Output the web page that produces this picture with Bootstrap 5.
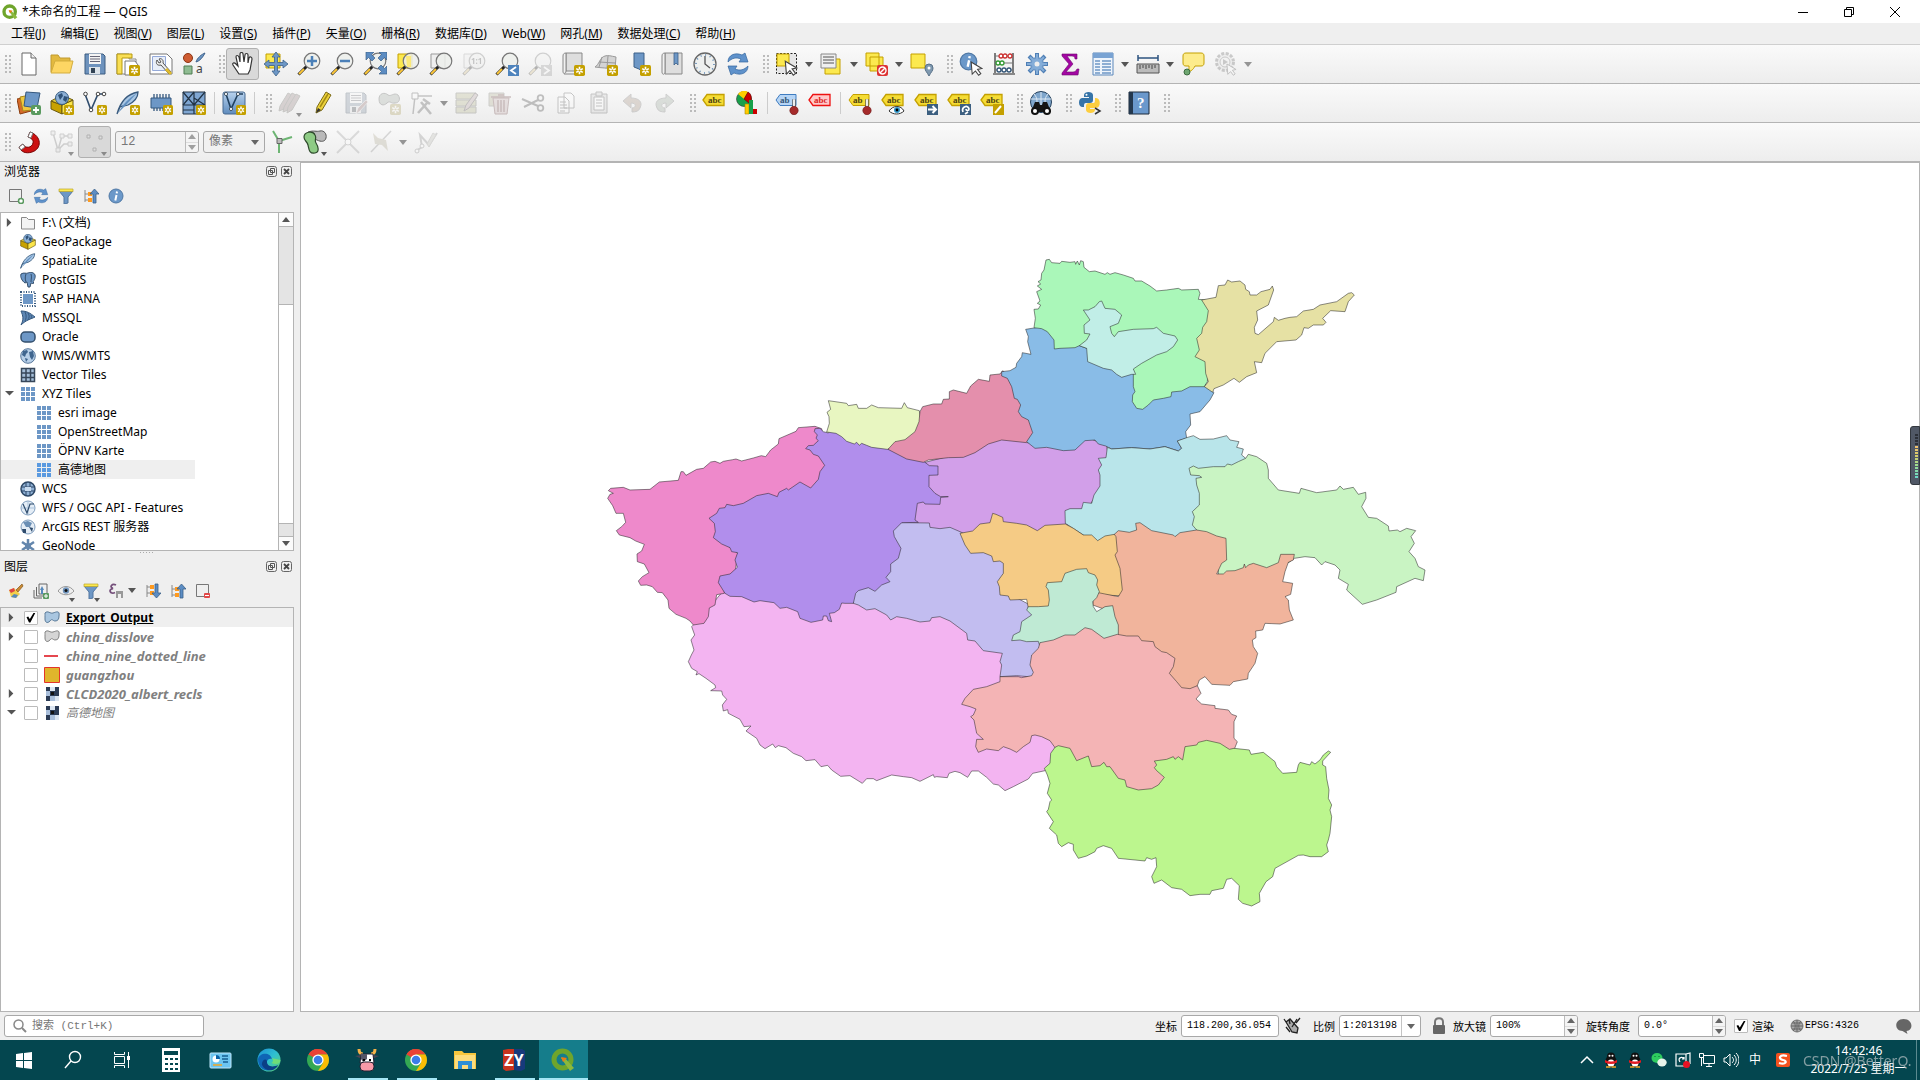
<!DOCTYPE html>
<html lang="zh-CN">
<head>
<meta charset="utf-8">
<meta name="viewport" content="width=device-width, initial-scale=1">
<title>*未命名的工程 — QGIS</title>
<link href="https://cdn.jsdelivr.net/npm/bootstrap@5.3.0/dist/css/bootstrap.min.css" rel="stylesheet">
<style>
:root{--edge:#b4b4b4;--face:#efefef;--mono:"Liberation Mono","Noto Sans CJK SC",monospace}
body{font-family:"Noto Sans","Noto Sans CJK SC",sans-serif;font-size:12px;line-height:18px;color:#000;background:var(--face)}
button{font:inherit;color:inherit}
.titlebar{height:23px;background:#fff;padding-left:2px}
.titlebar .logo{width:16px;height:16px;margin-right:4px;flex:none}
.win-btn{width:46px;height:23px}
.win-btns{margin-right:2px}
.menubar{height:22px;border-bottom:1px solid #cfcfcf}
.menubar a{color:#000;text-decoration:none;padding:0 8px 0 7px}
.toolbar{height:39px;border-bottom:1px solid var(--edge);background:linear-gradient(#fafafa,#ededed)}
.tool{width:33px;height:32px;padding:0;border:1px solid transparent;border-radius:3px;background:none;display:flex;align-items:center;justify-content:center;position:relative;flex:none}
.tool.on{background:#d9d9d9;border-color:#b0b0b0}
.tool svg{width:24px;height:24px}
.off svg{opacity:.3;filter:grayscale(.6)}
.drop{width:12px;flex:none;display:flex;align-items:center;justify-content:center}
.drop::after,.sub::after{content:"";border:4px solid transparent;border-top:5px solid #555;border-bottom:0}
.sub::after{position:absolute;right:3px;bottom:1px;border-width:4px 3px 0}
.drop.off::after,.off.sub::after{opacity:.6}
.grip{width:16px;height:20px;flex:none;background:radial-gradient(circle,#bbb 1px,transparent 1px) 8px 0/4px 4px;background-clip:content-box;padding-left:8px;padding-right:1px}
.grip.first{width:12px;padding-left:4px;padding-right:1px;background-position:4px 0}
.bar{width:7px;height:22px;flex:none;border-left:1px solid #ccc;margin-left:4px;margin-right:-4px}
.field{border:1px solid #a8a8a8;border-radius:3px;background:#fff;height:22px;display:flex;overflow:hidden;position:relative;flex:none}
.field input,.field select{border:0;outline:0;background:transparent;padding:0 5px;min-width:0;flex:1;width:100%;appearance:none;color:#000;font:10px/20px var(--mono)}
.field.dim{background:#f1f1f1}
.field.dim input,.field.dim select{color:#777;font-size:12px}
.field.pick::after{content:"";position:absolute;right:5px;top:8px;border:4px solid transparent;border-top:5px solid #666;border-bottom:0;pointer-events:none}
.field.split::before{content:"";position:absolute;right:18px;top:0;bottom:0;border-left:1px solid #c4c4c4}
.spin{width:13px;border-left:1px solid #bbb;display:flex;flex-direction:column}
.spin button{flex:1;padding:0;border:0;background:#f4f4f4;display:flex;align-items:center;justify-content:center}
.spin button::after{content:"";border:4px solid transparent;border-bottom:5px solid #666;border-top:0}
.spin button+button{border-top:1px solid #ddd}
.spin button+button::after{border-top:5px solid #666;border-bottom:0}
.dim .spin button::after{opacity:.6}
.side{width:300px;padding-right:6px;flex:none}
.dock-head{height:19px;padding:0 2px 0 4px}
.dock-head button{width:11px;height:11px;padding:0;border:0;background:none;display:flex}
.dock-tools{height:31px;padding:0 0 2px 3px}
.dock-tools button{width:25px;height:25px;padding:0;border:0;background:none;display:flex;align-items:center;justify-content:center;position:relative}
.dock-tools svg,.tree svg{width:16px;height:16px;flex:none}
.dock-tools .drop{margin:0 2px 0 -2px}
.tree{border:1px solid var(--edge);background:#fff;overflow:hidden}
.tree-browser{height:339px}
.tree ul{margin:0;padding:0;list-style:none}
.tree li{height:19px;display:flex;align-items:center;padding-left:19px;position:relative;white-space:nowrap}
.tree li svg{margin-right:6px}
.tree li.deep{padding-left:35px}
.tree li.picked{background:#efefef;width:194px}
.picked svg{filter:saturate(1.5)}
.tw{position:absolute;left:4px;top:5px;width:9px;height:9px;padding:0;border:0;background:#555;clip-path:polygon(20% 0,70% 50%,20% 100%)}
.tw.open{clip-path:polygon(0 22%,100% 22%,50% 72%)}
.layers li{padding-left:23px;font-size:13px;font-weight:700;font-style:italic;color:#808080}
.layers li svg{margin:0 6px 0 6px}
.layers .tw{left:6px}
.layers li.current{background:#efefef;color:#000;font-size:12px;font-style:normal;text-decoration:underline}
.layers li.base{font-size:12px}
.grey-icon{filter:grayscale(1) brightness(1.1)}
.tick{appearance:none;width:14px;height:14px;margin:0;border:1px solid #bbb;background:#fff;flex:none;border-radius:1px}
.tick:checked::before{content:"";display:block;width:10px;height:10px;margin:1px;background:#000;clip-path:polygon(5% 48%,22% 40%,38% 66%,78% 0,95% 0,44% 100%,30% 100%)}
.scroll-col{width:15px;border-left:1px solid var(--edge);flex:none;display:flex;flex-direction:column}
.scroll-col button{height:13px;border:0;padding:0;background:#fbfbfb;display:flex;align-items:center;justify-content:center}
.scroll-col button::after{content:"";border:4px solid transparent;border-bottom:5px solid #555;border-top:0}
.scroll-col button:last-child::after{border-top:5px solid #555;border-bottom:0}
.trough{background:#e4e4e4;border:solid var(--edge);border-width:1px 0;height:14px}
.trough.long{height:79px}
.splitter{height:6px}
.splitter i{display:block;width:16px;height:3px;margin:auto;background:radial-gradient(circle,#aaa 1px,transparent 1px) 0 0/3px 3px}
.canvas{border:1px solid var(--edge);background:#fff;position:relative;min-width:0}
.canvas>svg{width:100%;height:100%;display:block}
.meter{position:absolute;right:-1px;top:263px;width:10px;height:59px;border-radius:3px 0 0 3px;background:#505866;border:1px solid #33383f;padding:7px 1px 5px 4px}
.meter i{display:block;height:100%;background:repeating-linear-gradient(transparent 0 2px,#505866 2px 3px),linear-gradient(#2c3038 0 25%,#f0c070 26%,#d8cc68 48%,#9bdc90 70%,#64d8d0)}
.status{height:28px;font-family:"Noto Sans CJK SC",sans-serif;font-size:11px}
.status .find input{font-size:11px;padding-left:5px}
.status .field select{padding:0 0 0 3px}
.find{width:200px}
.find input::placeholder{color:#777}
.w-coord{width:98px}.w-scale{width:82px}.w-spin{width:88px}.w-tol{width:84px}.w-unit{width:62px}
.epsg{font:10px/20px var(--mono);border:0;background:none;padding:0;gap:1px;margin-right:36px}
.taskbar{height:40px;background:#04464f;color:#fff}
.task{width:49px;height:40px;border:0;background:none;padding:0 2px 0 0;display:flex;align-items:center;justify-content:center;position:relative;flex:none}
.task svg{width:24px;height:24px}
.task.run::after{content:"";position:absolute;left:5px;right:4px;bottom:0;height:2px;background:#a5e6f5}
.task.front{background:#157d8b}
.task.front::after{left:0;right:0}
.tray button{width:24px;height:40px;border:0;background:none;color:#fff;padding:0;display:flex;align-items:center;justify-content:center}
.tray svg{width:16px;height:16px}
.clock{width:116px;height:40px;position:relative;text-align:center;border-right:1px solid #5b8a90;line-height:18px;margin-right:3px;margin-left:2px}
.clock .stamp{position:absolute;left:2px;top:12px;color:#a3b4b7;opacity:.8;font-size:14px;white-space:nowrap}
</style>
<script src="https://cdn.jsdelivr.net/npm/bootstrap@5.3.0/dist/js/bootstrap.bundle.min.js"></script>
</head>
<body class="vh-100 overflow-hidden d-flex flex-column">

<svg width="0" height="0" class="position-absolute" aria-hidden="true">
<defs>
<linearGradient id="g-blue" x1="0" y1="0" x2="0" y2="1"><stop stop-color="#b9d3ee"/><stop offset="1" stop-color="#5e8bbd"/></linearGradient>
<linearGradient id="g-edge" x1="0" y1="0" x2="1" y2="1"><stop stop-color="#1b8fd6"/><stop offset=".5" stop-color="#2fc0d0"/><stop offset="1" stop-color="#5fd06a"/></linearGradient>
<symbol id="star" viewBox="0 0 10 10"><rect width="10" height="10" rx="1.500" fill="#c4a000"/><path d="M5 1.600v6.800M2 3.300l6 3.400M8 3.300L2 6.700" stroke="#fff" stroke-width="1.500"/><circle cx="5" cy="5" r="1" fill="#c4a000"/></symbol>
<symbol id="mag" viewBox="0 0 24 24"><path d="M9.500 14.500l-8 8" stroke="#222" stroke-width="3"/><path d="M7 17l-5 5" stroke="#fcc73a" stroke-width="2"/><circle cx="15" cy="9" r="7.800" fill="#eceeeb" fill-opacity=".85" stroke="#777" stroke-width="1.200"/></symbol>
<symbol id="tag" viewBox="0 0 24 24"><path d="M1 9l4-5.500h17v11H5z" fill="#f5dc35" stroke="#c4a000" stroke-width="1.300"/><text x="6" y="12" font-family="Liberation Serif" font-weight="bold" font-size="9" fill="#4d4210">abc</text></symbol>
<symbol id="pin" viewBox="0 0 8 16"><path d="M4 9V2" stroke="#555" stroke-width="3"/><path d="M4 9V2" stroke="#fff" stroke-width="1.600"/><circle cx="4" cy="12" r="3.700" fill="#a52a2a" stroke="#731d1d" stroke-width=".6"/></symbol>
<symbol id="globe" viewBox="0 0 16 16"><circle cx="8" cy="8" r="7.300" fill="#b7cfe8" stroke="#57779a"/><path d="M3 3l4-1 1 2-2 2-1 3-3-2zM9 4l4-1 1 5-2 4-2-3zM5 10l3 1-2 3z" fill="#3f658e"/></symbol>
<symbol id="grid9" viewBox="0 0 16 16"><path d="M1 1h4v4H1zM6 1h4v4H6zM11 1h4v4h-4zM1 6h4v4H1zM6 6h4v4H6zM11 6h4v4h-4zM1 11h4v4H1zM6 11h4v4H6zM11 11h4v4h-4z" fill="#6d97c6"/></symbol>
<symbol id="sync" viewBox="0 0 24 24"><path d="M2 10C2 3 9 0 16 3l3-2 3 9h-9l2-3c-5-2-9-1-13 3zM22 14c0 7-7 10-14 7l-3 2-3-9h9l-2 3c5 2 9 1 13-3z" fill="#5f92cb" stroke="#33669e" stroke-width=".7"/></symbol>
<symbol id="funnel" viewBox="0 0 16 16"><path d="M1 3h14L10 9v6l-4 1V9z" fill="#6d97c6" stroke="#5276a0"/><path d="M1 1h14v2.500H1z" fill="#fce94f" stroke="#bba62c" stroke-width=".7"/></symbol>
<symbol id="feather" viewBox="0 0 24 24"><path d="M1 23C4 12 11 3 22 1c0 7-6 11-10 13-3 1-6 1-8 2z" fill="#a9c7e5" stroke="#385a7e" stroke-width="1.300"/><path d="M2 22C7 13 13 7 21 2L9 15z" fill="#6290c0"/></symbol>
<symbol id="box" viewBox="0 0 24 24"><path d="M1 10l11 4v9L1 18z" fill="#c8a200" stroke="#6b5a10"/><path d="M23 9l-11 5v9l11-6z" fill="#fbe54a" stroke="#6b5a10"/><path d="M1 10l11-6 11 5-11 5z" fill="#e7cf3c" stroke="#6b5a10"/><circle cx="12" cy="7" r="6.500" fill="#8cb0d6" stroke="#365a80"/><path d="M8 4l4-2 1 3-3 4zM14 5l4 1-2 5-3-2z" fill="#2f5278"/></symbol>
<symbol id="tree-up" viewBox="0 0 16 16"><path d="M2 2v12M2 6h4M2 12h4" stroke="#888"/><path d="M5 4h4v4H5zM5 10h4v4H5z" fill="#ff9a1f"/><path d="M7 6l4.500-5L16 6h-3v9h-3V6z" fill="#5c8dc4" stroke="#3b5f88" stroke-width=".8"/></symbol>
<symbol id="tree-down" viewBox="0 0 16 16"><path d="M2 2v12M2 4h4M2 10h4" stroke="#888"/><path d="M5 2h4v4H5zM5 8h4v4H5z" fill="#ff9a1f"/><path d="M7 10l4.500 5L16 10h-3V1h-3v9z" fill="#5c8dc4" stroke="#3b5f88" stroke-width=".8"/></symbol>
<symbol id="info" viewBox="0 0 16 16"><circle cx="8" cy="8" r="7" fill="#6b98c9" stroke="#4f78a5"/><path d="M9 3.500l-.3 1.800M8.500 7l-1.200 5.500" stroke="#fff" stroke-width="2"/></symbol>
<symbol id="arrow-cur" viewBox="0 0 12 14"><path d="M1 1l10 6-4 .8 3 4-2 1.500-3-4-3 3z" fill="#fff" stroke="#444"/></symbol>
<symbol id="poly" viewBox="0 0 16 16"><path d="M1 3c3-3 5 1 8 0s7-3 6 3c0 3-1 5-4 5-2 0-3-3-5 0-3 3-5 1-5-2s0-4 0-6z" fill="#a9c6e0" stroke="#5a7a98"/></symbol>
<symbol id="raster" viewBox="0 0 16 16"><path d="M2 1h13v14H2z" fill="#a9bfdc"/><path d="M2 1h4v4H2zM11 5h4v5h-4zM6 5h5v5H6zM2 10h4v5H2zM11 1h4v4h-4z" fill="#2b3b55"/><path d="M6 1h5v4H6zM11 10h4v5h-4z" fill="#dbe5f1"/><path d="M7 6h3v3H7z" fill="#111"/></symbol>
<symbol id="pencil" viewBox="0 0 24 24"><path d="M5 22l1-6L15 1l5 3L11 19z" fill="#edd23b" stroke="#7a6917"/><path d="M9 16L17 3" stroke="#a48b13" stroke-width="1.500"/><path d="M5 22l2-5 3 2z" fill="#333"/></symbol>
<symbol id="disk" viewBox="0 0 24 24"><path d="M2 2h18l2 2v18H2z" fill="#6d92bd" stroke="#3c5c80"/><path d="M6 2h12v10H6z" fill="#f4f4f4"/><path d="M7 4.500h10M7 7h10M7 9.500h10" stroke="#667"/><path d="M6 15h11v7H6z" fill="#dde4ea"/><path d="M8 16h4v5H8z" fill="#345"/></symbol>
<symbol id="chrome" viewBox="0 0 24 24"><circle cx="12" cy="12" r="11" fill="#34a853"/><path d="M12 12L2.500 6.500A11 11 0 0121.500 6.500H12z" fill="#ea4335"/><path d="M12 23a11 11 0 009.500-16.500H12L17 15z" fill="#fbbc04"/><path d="M2.500 6.500A11 11 0 0112 1v8z" fill="#ea4335"/><circle cx="12" cy="12" r="5.600" fill="#fff"/><circle cx="12" cy="12" r="4.300" fill="#3b7de9"/></symbol>
<symbol id="qgis" viewBox="0 0 24 24"><circle cx="11.500" cy="11.500" r="8.500" fill="none" stroke="#6fa52c" stroke-width="5"/><path d="M10 10l4 0 9 10-4 3z" fill="#8cb83c"/><path d="M10 9l6 1-4 4z" fill="#ee7913"/></symbol>
<symbol id="qq" viewBox="0 0 16 16"><ellipse cx="8" cy="9" rx="5.500" ry="6" fill="#111"/><circle cx="8" cy="4.500" r="4" fill="#111"/><ellipse cx="8" cy="11" rx="3.500" ry="3.600" fill="#fff"/><path d="M2 8c4 2 8 2 12 0v2.500c-4 2-8 2-12 0z" fill="#e31b23"/><circle cx="6.500" cy="3.800" r="1" fill="#fff"/><circle cx="9.500" cy="3.800" r="1" fill="#fff"/><path d="M3 15h4.500M8.500 15H13" stroke="#f5a623" stroke-width="1.500"/></symbol>
<symbol id="glasses" viewBox="0 0 24 24"><path d="M2 21l4-10h4l1 3h2l1-3h4l4 10z" fill="#151515"/><circle cx="6" cy="20" r="4" fill="#111"/><circle cx="18" cy="20" r="4" fill="#111"/><circle cx="6" cy="20" r="2" fill="#fff"/><circle cx="18" cy="20" r="2" fill="#fff"/></symbol>
</defs>
</svg>

<header class="titlebar d-flex align-items-center flex-shrink-0">
  <svg class="logo"><use href="#qgis"/></svg>
  <span class="flex-grow-1">*未命名的工程 — QGIS</span>
  <div class="win-btns d-flex">
  <button class="win-btn btn p-0 border-0 rounded-0" aria-label="最小化"><svg width="10" height="10" class="d-block mx-auto"><path d="M0 5.500h10" stroke="#000"/></svg></button>
  <button class="win-btn btn p-0 border-0 rounded-0" aria-label="还原"><svg width="10" height="10" class="d-block mx-auto"><path d="M.5 2.500h7v7h-7zM2.500 2.500v-2h7v7h-2" fill="none" stroke="#000"/></svg></button>
  <button class="win-btn btn p-0 border-0 rounded-0" aria-label="关闭"><svg width="10" height="10" class="d-block mx-auto"><path d="M0 0l10 10M10 0L0 10" stroke="#000"/></svg></button>
  </div>
</header>

<nav class="menubar d-flex align-items-center flex-shrink-0 ps-1">
  <a href="#">工程(<u>J</u>)</a><a href="#">编辑(<u>E</u>)</a><a href="#">视图(<u>V</u>)</a><a href="#">图层(<u>L</u>)</a><a href="#">设置(<u>S</u>)</a><a href="#">插件(<u>P</u>)</a><a href="#">矢量(<u>O</u>)</a><a href="#">栅格(<u>R</u>)</a><a href="#">数据库(<u>D</u>)</a><a href="#">Web(<u>W</u>)</a><a href="#">网孔(<u>M</u>)</a><a href="#">数据处理(<u>C</u>)</a><a href="#">帮助(<u>H</u>)</a>
</nav>

<div class="toolbar d-flex align-items-center flex-shrink-0" role="toolbar">
  <span class="grip first"></span>
  <button class="tool" aria-label="新建工程"><svg viewBox="0 0 24 24"><path d="M5 1h9l5 5v17H5z" fill="#fff" stroke="#666"/><path d="M14 1v5h5" fill="#eee" stroke="#666"/></svg></button>
  <button class="tool" aria-label="打开工程"><svg viewBox="0 0 24 24"><path d="M1 20V3h7l2 3h10v4" fill="#e2b93f" stroke="#c09a2e"/><path d="M1 21L5 9h18l-3 12z" fill="#fdd663" stroke="#d3ad3f"/></svg></button>
  <button class="tool" aria-label="保存工程"><svg><use href="#disk"/></svg></button>
  <button class="tool" aria-label="新建打印布局"><svg viewBox="0 0 24 24"><path d="M1 2h12l0 5 7 0v15H1z" fill="#fff" stroke="#888"/><path d="M1 2h15v4H6v16H1z" fill="#f9df55" stroke="#b79a10"/><path d="M9 9h10l3 4v10H9z" fill="#fff" stroke="#777"/><use href="#star" x="13" y="13" width="11" height="11"/></svg></button>
  <button class="tool" aria-label="布局管理"><svg viewBox="0 0 24 24"><path d="M1 2h17l5 5v15H1z" fill="#fff" stroke="#777"/><path d="M3.500 4.500h13v14h-13z" fill="#e8eef9" stroke="#94a9d8"/><path d="M8 8c-2 4 1 6 4 5l8 9 2-2-8-9c1-4-3-5-4-4l2 3-2 1z" fill="#eee" stroke="#555"/><path d="M17 17l5 5" stroke="#e0bb2b" stroke-width="3"/></svg></button>
  <button class="tool" aria-label="样式管理"><svg viewBox="0 0 24 24"><circle cx="6" cy="6" r="4.500" fill="#cf5c32" stroke="#8d3513"/><path d="M14 10c1-4 6-8 9-9-2 4-5 8-9 9z" fill="#6d97c6" stroke="#3f628a"/><path d="M2 14h8v8H2z" fill="#8fbc92" stroke="#4f7d52"/><text x="14" y="21" font-family="Noto Sans" font-size="12" fill="#444">a</text></svg></button>
  <span class="grip"></span>
  <button class="tool on" aria-label="平移地图"><svg viewBox="0 0 24 24"><path d="M8 22l-6-9c-1-2 1-3 3-1l2 2-2-9c0-2 2-2 3 0l1 5V2c0-2 3-2 3 0l1 8 1-7c0-2 3-2 3 0v8l1-5c1-2 3-1 3 1l-2 11-2 4z" fill="#fff" stroke="#333" stroke-width="1.200"/></svg></button>
  <button class="tool" aria-label="平移到选择"><svg viewBox="0 0 24 24"><path d="M2 2h14v14H2z" fill="#fce94f" stroke="#c4a000"/><path d="M12 0l4 5h-2.500v5.500H19V8l5 4-5 4v-2.500h-5.500V19H16l-4 5-4-5h2.500v-5.500H5V16l-5-4 5-4v2.500h5.500V5H8z" fill="#6d97c6" stroke="#3d6188" stroke-width=".8"/></svg></button>
  <button class="tool" aria-label="放大"><svg viewBox="0 0 24 24"><use href="#mag"/><path d="M15 4v10M10 9h10" stroke="#4b80b8" stroke-width="2.500"/></svg></button>
  <button class="tool" aria-label="缩小"><svg viewBox="0 0 24 24"><use href="#mag"/><path d="M10 9h10" stroke="#4b80b8" stroke-width="2.500"/></svg></button>
  <button class="tool" aria-label="全图显示"><svg viewBox="0 0 24 24"><use href="#mag"/><path d="M3 0h8L8.500 2.500 12 6 9 9 5.500 5.500 3 8zM24 0v8l-2.500-2.500L18 9l-3-3 3.500-3.500L16 0zM24 22h-8l2.500-2.500L15 16l3-3 3.500 3.500L24 14z" fill="#5c8cc2" stroke="#3d6188" stroke-width=".7"/></svg></button>
  <button class="tool" aria-label="缩放到选择"><svg viewBox="0 0 24 24"><path d="M2 2h14v14H2z" fill="#fce94f" stroke="#c4a000"/><use href="#mag"/><path d="M10 4h5v11h-4z" fill="#fbe979"/></svg></button>
  <button class="tool" aria-label="缩放到图层"><svg viewBox="0 0 24 24"><path d="M2 2h14v14H2z" fill="#eee" stroke="#999"/><use href="#mag"/></svg></button>
  <button class="tool off" aria-label="原始分辨率"><svg viewBox="0 0 24 24"><path d="M2 2h14v14H2z" fill="#eee" stroke="#999"/><use href="#mag"/><text x="9" y="12" font-family="Noto Sans" font-size="8" font-weight="bold" fill="#555">1:1</text></svg></button>
  <button class="tool" aria-label="上一视图"><svg viewBox="0 0 24 24"><use href="#mag"/><path d="M13 13h11v11H13z" fill="#4f84bd"/><path d="M21 15l-5 3.500 5 3.500" fill="none" stroke="#fff" stroke-width="1.800"/></svg></button>
  <button class="tool off" aria-label="下一视图"><svg viewBox="0 0 24 24"><use href="#mag"/><path d="M13 13h11v11H13z" fill="#999"/><path d="M16 15l5 3.500-5 3.500" fill="none" stroke="#fff" stroke-width="1.800"/></svg></button>
  <button class="tool" aria-label="新建地图视图"><svg viewBox="0 0 24 24"><path d="M5 1h16v18H5z" fill="#dedede" stroke="#888"/><path d="M5 1c-2 0-3 1-3 3v16c0 2 3 2 3-1z" fill="#f1f1f1" stroke="#888"/><path d="M3 22h11" stroke="#888"/><use href="#star" x="13" y="13" width="11" height="11"/></svg></button>
  <button class="tool" aria-label="新建三维视图"><svg viewBox="0 0 24 24"><path d="M1 15C5 13 6 5 11 4c3-1 6 0 11 1l-1 12c-8-1-13-1-20-2z" fill="#d4d4d4" stroke="#999"/><path d="M5 10l16 1M8 5l-3 10M14 4l-1 12" stroke="#999" fill="none"/><use href="#star" x="13" y="13" width="11" height="11"/></svg></button>
  <button class="tool" aria-label="新建书签"><svg viewBox="0 0 24 24"><path d="M7 1h10v20l-5-4-5-2z" fill="#6d97c6" stroke="#3d6188"/><use href="#star" x="13" y="13" width="11" height="11"/></svg></button>
  <button class="tool" aria-label="显示书签"><svg viewBox="0 0 24 24"><path d="M5 1h17v21H5z" fill="#dedede" stroke="#888"/><path d="M5 1c-2 0-3 1-3 3v16c0 3 3 3 3 0z" fill="#f1f1f1" stroke="#888"/><path d="M14 1h4v12l-2-2-2 2z" fill="#6d97c6" stroke="#3d6188" stroke-width=".8"/></svg></button>
  <button class="tool" aria-label="时态控制"><svg viewBox="0 0 24 24"><circle cx="12" cy="12" r="11" fill="#eef0ef" stroke="#666" stroke-width="1.300"/><circle cx="12" cy="12" r="9" fill="none" stroke="#5580b0" stroke-dasharray="1 3.700" stroke-width="1.500"/><path d="M12 4v8l5 4" fill="none" stroke="#555" stroke-width="1.300"/></svg></button>
  <button class="tool" aria-label="刷新"><svg><use href="#sync"/></svg></button>
  <span class="grip"></span>
  <button class="tool" aria-label="选择要素"><svg viewBox="0 0 24 24"><path d="M1.500 1.500h20v20h-20z" fill="#e6e6e6" stroke="#222" stroke-dasharray="2 1.500"/><path d="M2 2h12v12H2z" fill="#fce94f" stroke="#c4a000"/><use href="#arrow-cur" x="9" y="8" width="14" height="16"/></svg></button><span class="drop"></span>
  <button class="tool" aria-label="按值选择"><svg viewBox="0 0 24 24"><path d="M5 7h15v15H5z" fill="#fce94f" stroke="#c4a000"/><path d="M1 2h15v14H1z" fill="#efefef" stroke="#888"/><path d="M3 5h11M3 8h11M3 11h11" stroke="#888" stroke-width="1.500"/></svg></button><span class="drop"></span>
  <button class="tool" aria-label="取消选择"><svg viewBox="0 0 24 24"><path d="M1 1h13v13H1zM5 5h13v14H5z" fill="#fce94f" stroke="#c4a000"/><rect x="12" y="13" width="11" height="11" rx="2" fill="#d33"/><circle cx="17.500" cy="18.500" r="3.500" fill="none" stroke="#fff" stroke-width="1.400"/><path d="M15 21l5-5" stroke="#fff" stroke-width="1.400"/></svg></button><span class="drop"></span>
  <button class="tool" aria-label="按位置选择"><svg viewBox="0 0 24 24"><path d="M1 2h14v14H1z" fill="#fce94f" stroke="#c4a000"/><path d="M19 24c-2-4-4-5-4-8a4 4 0 018 0c0 3-2 4-4 8z" fill="#7f99b0" stroke="#587087"/><circle cx="19" cy="16" r="1.500" fill="#fff"/></svg></button>
  <span class="grip"></span>
  <button class="tool" aria-label="识别要素"><svg viewBox="0 0 24 24"><use href="#info" width="19" height="19"/><use href="#arrow-cur" x="11" y="9" width="13" height="15"/></svg></button>
  <button class="tool" aria-label="字段计算器"><svg viewBox="0 0 24 24"><path d="M3 1v20M21 1v20" stroke="#555" stroke-width="1.500"/><path d="M1 21h22v2H1z" fill="#888"/><path d="M3 4h18M3 11h18M3 18h18" stroke="#777"/><g fill="#fff" stroke-width="1.300"><g stroke="#c33"><circle cx="9" cy="4" r="2"/><circle cx="13" cy="4" r="2"/><circle cx="18" cy="4" r="2"/></g><g stroke="#393"><circle cx="6" cy="11" r="2"/><circle cx="10" cy="11" r="2"/></g><g stroke="#357"><circle cx="7" cy="18" r="2"/><circle cx="12" cy="18" r="2"/><circle cx="17" cy="18" r="2"/></g></g></svg></button>
  <button class="tool" aria-label="工具箱"><svg viewBox="0 0 24 24"><g stroke="#4f7fb5" stroke-width="4"><path d="M12 1v22M1 12h22M4 4l16 16M20 4L4 20"/></g><circle cx="12" cy="12" r="7" fill="#6d97c6"/><g stroke="#84add8" stroke-width="2"><path d="M12 2v20M2 12h20M5 5l14 14M19 5L5 19"/></g><circle cx="12" cy="12" r="5.500" fill="#84add8"/><circle cx="12" cy="12" r="2.500" fill="#eee"/></svg></button>
  <button class="tool" aria-label="统计面板"><svg viewBox="0 0 24 24"><path d="M4 2h15v5h-2c0-2-1-3-3-3H9l6 8-7 8h7c2 0 3-1 4-3h2l-1 6H4v-2l7-9-7-8z" fill="#a307a3" stroke="#6c0c6c" stroke-width=".6"/></svg></button>
  <button class="tool" aria-label="打开属性表"><svg viewBox="0 0 24 24"><path d="M2 1h20v22H2z" fill="#eef4fb" stroke="#5a87ba"/><path d="M2 1h20v5H2z" fill="#79a3d3"/><path d="M4 9h5M11 9h9M4 12h5M11 12h9M4 15h5M11 15h9M4 18h5M11 18h9M4 21h5M11 21h9" stroke="#6d97c6" stroke-width="1.500"/></svg></button><span class="drop"></span>
  <button class="tool" aria-label="测量"><svg viewBox="0 0 24 24"><path d="M2 6h20M2 3v6M22 3v6" stroke="#2e5480" stroke-width="1.500"/><path d="M1 12h22v9H1z" fill="#bbb" stroke="#555"/><path d="M4 13v4M7 13v3M10 13v4M13 13v3M16 13v4M19 13v3" stroke="#444"/></svg></button><span class="drop"></span>
  <button class="tool" aria-label="地图提示"><svg viewBox="0 0 24 24"><path d="M5 1h15c2 0 3 1 3 3v7c0 2-1 3-3 3h-6c-2 4-4 5-7 6 1-2 1-4 1-6H5c-2 0-3-1-3-3V4c0-2 1-3 3-3z" fill="#fdec8c" stroke="#c4a000"/><circle cx="6" cy="20" r="3" fill="#6ea671" stroke="#3c6c3f"/></svg></button>
  <button class="tool off" aria-label="运行要素动作"><svg viewBox="0 0 24 24"><circle cx="11" cy="10" r="8.500" fill="#ddd" stroke="#666" stroke-width="3" stroke-dasharray="3 1.500"/><circle cx="11" cy="10" r="5" fill="#eee" stroke="#666"/><path d="M9 7l5 3-5 3z" fill="#666"/><use href="#arrow-cur" x="12" y="11" width="11" height="13"/></svg></button><span class="drop off"></span>
</div>

<div class="toolbar d-flex align-items-center flex-shrink-0" role="toolbar">
  <span class="grip first"></span>
  <button class="tool" aria-label="数据源管理器"><svg viewBox="0 0 24 24"><path d="M0 8l11-2 3 14-11 3z" fill="#d66a28" stroke="#8b3d10"/><path d="M3 6l10-2 2 15-9 1z" fill="#f0c83e" stroke="#a8861a"/><path d="M9 1l14 1-3 15-13-2z" fill="#6d97c6" stroke="#35587e"/><rect x="14" y="14" width="10" height="10" rx="2" fill="#5a9a5f"/><path d="M19 16v6M16 19h6" stroke="#fff" stroke-width="1.800"/></svg></button>
  <button class="tool" aria-label="新建 GeoPackage"><svg viewBox="0 0 24 24"><use href="#box"/><use href="#star" x="14" y="14" width="10" height="10"/></svg></button>
  <button class="tool" aria-label="新建 Shapefile"><svg viewBox="0 0 24 24"><path d="M2 3l6 16 7-16h6" fill="none" stroke="#2f4c6d" stroke-width="1.600"/><g fill="#fff" stroke="#444"><circle cx="2.500" cy="3" r="1.800"/><circle cx="8" cy="19" r="1.800"/><circle cx="15" cy="3" r="1.800"/><circle cx="21" cy="3" r="1.800"/></g><use href="#star" x="14" y="14" width="10" height="10"/></svg></button>
  <button class="tool" aria-label="新建 SpatiaLite"><svg viewBox="0 0 24 24"><use href="#feather"/><use href="#star" x="14" y="14" width="10" height="10"/></svg></button>
  <button class="tool" aria-label="新建临时图层"><svg viewBox="0 0 24 24"><path d="M5 3v17M8 3v17M11 3v17M14 3v17M17 3v17M20 3v17" stroke="#35587e" stroke-width="1.300"/><path d="M2 7h20v10H2z" fill="#6d97c6" stroke="#35587e"/><use href="#star" x="14" y="14" width="10" height="10"/></svg></button>
  <button class="tool" aria-label="新建网格图层"><svg viewBox="0 0 24 24"><path d="M1 1h22v22H1z" fill="#7fa6d2" stroke="#234"/><path d="M12 1v22M1 14h22M1 1l11 13M1 14L12 1M12 14L23 1M12 7l11 7M1 19h11" stroke="#234" fill="none" stroke-width="1.200"/><use href="#star" x="14" y="14" width="10" height="10"/></svg></button>
  <span class="bar"></span>
  <button class="tool" aria-label="新建虚拟图层"><svg viewBox="0 0 24 24"><rect x="1" y="1" width="22" height="22" rx="2" fill="url(#g-blue)" stroke="#46698f"/><path d="M4 3l5 15L16 3h5" fill="none" stroke="#20405f" stroke-width="1.600"/><g fill="#fff" stroke="#456"><circle cx="4" cy="3" r="1.600"/><circle cx="9" cy="18" r="1.600"/><circle cx="16" cy="3" r="1.600"/></g><use href="#star" x="14" y="14" width="10" height="10"/></svg></button>
  <span class="bar"></span><span class="grip"></span>
  <button class="tool off sub" aria-label="当前编辑"><svg viewBox="0 0 24 24"><g fill="#a87d7d" stroke="#665"><path d="M1 20l1-5L10 2l4 2L6 18z"/><path d="M5 21l1-5L14 2l4 2-8 15z"/><path d="M9 22l1-6L18 3l4 2-8 14z"/></g></svg></button>
  <button class="tool" aria-label="切换编辑"><svg><use href="#pencil"/></svg></button>
  <button class="tool off" aria-label="保存编辑"><svg viewBox="0 0 24 24"><use href="#disk"/><path d="M12 23l2-6 8-8 2 2-8 9z" fill="#b66" stroke="#fff" stroke-width=".5"/></svg></button>
  <button class="tool off" aria-label="添加面要素"><svg viewBox="0 0 24 24"><path d="M2 8c0-6 6-7 9-4 3 2 6-3 10 0 3 4 1 8-3 8-4 1-5-3-8 0s-8 3-8-4z" fill="#9ab09a" stroke="#555"/><use href="#star" x="13" y="13" width="11" height="11"/></svg></button>
  <button class="tool off" aria-label="节点工具"><svg viewBox="0 0 24 24"><path d="M5 5h17M5 5L3 23" stroke="#555" stroke-width="1.500"/><path d="M2 2h6v6H2z" fill="#fff" stroke="#444"/><path d="M8 22l9-10M11 11l10 12M13 8l7 5" stroke="#555" stroke-width="2.600"/></svg></button><span class="drop off"></span>
  <button class="tool off" aria-label="修改属性"><svg viewBox="0 0 24 24"><path d="M1 2h20v6H1zM1 9h20v6H1zM1 16h20v6H1z" fill="#b7b84b" stroke="#665"/><path d="M9 20l2-6 9-12 3 2-9 13z" fill="#c99" stroke="#544"/></svg></button>
  <button class="tool off" aria-label="删除选中"><svg viewBox="0 0 24 24"><path d="M1 2h15v13H1z" fill="#b8b060" stroke="#776"/><path d="M5 7h16l-2 16H7z" fill="#e0a5a5" stroke="#933"/><path d="M3 6h20M10 9v12M13 9v12M16 9v12M10 4h6" stroke="#933" stroke-width="1.500"/></svg></button>
  <button class="tool off" aria-label="剪切"><svg viewBox="0 0 24 24"><path d="M1 8l16 7M3 16l14-7" stroke="#444" stroke-width="2"/><circle cx="19.500" cy="7" r="2.800" fill="none" stroke="#444" stroke-width="1.800"/><circle cx="19.500" cy="17" r="2.800" fill="none" stroke="#444" stroke-width="1.800"/></svg></button>
  <button class="tool off" aria-label="复制"><svg viewBox="0 0 24 24"><path d="M10 2h7l3 3v12H10zM4 6h7l4 4v12H4z" fill="#fff" stroke="#555"/><path d="M6 11h6M6 14h7M6 17h7M6 20h5" stroke="#555"/></svg></button>
  <button class="tool off" aria-label="粘贴"><svg viewBox="0 0 24 24"><path d="M4 3h16v19H4z" fill="#ccc" stroke="#555"/><path d="M7 6h10v13H7z" fill="#fff" stroke="#555"/><path d="M9 1h6v4H9zM9 9h6M9 12h6M9 15h6" fill="#ccc" stroke="#555"/></svg></button>
  <button class="tool off" aria-label="撤销"><svg viewBox="0 0 24 24"><path d="M3 10l8-7v4c8 0 12 4 9 10-1 3-4 4-8 4v-4c4 0 5-5-1-5v5z" fill="#c08b60" stroke="#777"/></svg></button>
  <button class="tool off" aria-label="重做"><svg viewBox="0 0 24 24"><path d="M21 10l-8-7v4c-8 0-12 4-9 10 1 3 4 4 8 4v-4c-4 0-5-5 1-5v5z" fill="#8fb08f" stroke="#777"/></svg></button>
  <span class="grip"></span>
  <button class="tool" aria-label="图层标注选项"><svg><use href="#tag"/></svg></button>
  <button class="tool" aria-label="图层图表选项"><svg viewBox="0 0 24 24"><circle cx="9" cy="8" r="7.500" fill="#18a04a" stroke="#333" stroke-width=".6"/><path d="M9 8L3 3a7.500 7.500 0 0110-2z" fill="#fc0"/><path d="M9 8l4-7c4 2 4 8 2 12z" fill="#c00" stroke="#600" stroke-width=".6"/><path d="M10 13h4v10h-4z" fill="#fc0" stroke="#a80" stroke-width=".6"/><path d="M14 9h4v14h-4z" fill="#18a04a"/><path d="M18 18h4v5h-4z" fill="#c00"/></svg></button>
  <span class="bar"></span>
  <button class="tool" aria-label="高亮固定标注"><svg viewBox="0 0 24 24"><path d="M1 9l4-5.500h16v11H5z" fill="#b5d4f5" stroke="#3f7cc0"/><text x="5" y="12" font-family="Liberation Serif" font-weight="bold" font-size="9" fill="#357">ab</text><use href="#pin" x="14" y="6" width="10" height="18"/></svg></button>
  <button class="tool" aria-label="显示未放置标注"><svg viewBox="0 0 24 24"><path d="M1 9l4-5.500h17v11H5z" fill="#ffc9c9" stroke="#e11" stroke-width="1.300"/><text x="6" y="12" font-family="Liberation Serif" font-weight="bold" font-size="9" fill="#d22">abc</text></svg></button>
  <span class="bar"></span>
  <button class="tool" aria-label="固定标注"><svg viewBox="0 0 24 24"><path d="M1 9l4-5.500h16v11H5z" fill="#f5dc35" stroke="#c4a000"/><text x="5" y="12" font-family="Liberation Serif" font-weight="bold" font-size="9" fill="#4d4210">ab</text><use href="#pin" x="14" y="6" width="10" height="18"/></svg></button>
  <button class="tool" aria-label="显示隐藏标注"><svg viewBox="0 0 24 24"><use href="#tag"/><path d="M8 20c4-6 12-6 15 0-4 4-11 4-15 0z" fill="#fff" stroke="#333"/><circle cx="16" cy="19" r="3" fill="#39c"/><circle cx="16" cy="19" r="1.400" fill="#000"/></svg></button>
  <button class="tool" aria-label="移动标注"><svg viewBox="0 0 24 24"><use href="#tag"/><path d="M13 13h11v11H13z" fill="#3c5f80"/><path d="M14 18.500h7M18.500 15l3.500 3.500-3.500 3.500" stroke="#fff" fill="none" stroke-width="2"/></svg></button>
  <button class="tool" aria-label="旋转标注"><svg viewBox="0 0 24 24"><use href="#tag"/><path d="M13 13h11v11H13z" fill="#3c5f80"/><path d="M16 21c-2-5 5-8 6-3 0 2-3 2-3 0M18 23l3-2" stroke="#fff" fill="none" stroke-width="1.700"/></svg></button>
  <button class="tool" aria-label="修改标注"><svg viewBox="0 0 24 24"><use href="#tag"/><path d="M13 13h11v11H13z" fill="#c4a000"/><path d="M15 22l6-7" stroke="#fff" stroke-width="2"/></svg></button>
  <span class="grip"></span>
  <button class="tool" aria-label="搜索目录"><svg viewBox="0 0 24 24"><circle cx="12" cy="11" r="10.500" fill="#7fa6cc" stroke="#24405c"/><path d="M2 8h20M12 1v18M5 3c4 4 4 10 0 14M19 3c-4 4-4 10 0 14" fill="none" stroke="#dde8f3"/><use href="#glasses" width="24" height="24"/></svg></button>
  <span class="grip"></span>
  <button class="tool" aria-label="Python 控制台"><svg viewBox="0 0 24 24"><path d="M6 4c0-4 9-4 9 0v5c0 2-1 3-3 3H8c-2 0-2 1-2 4H4c-4 0-4-9 0-9h7V6H6z" fill="#3674a8"/><path d="M17 19c0 4-9 4-9 0v-4c0-2 1-3 3-3h4c2 0 2-1 2-5h1c5 0 5 10 0 10h-6v1h5z" fill="#fdce3e"/><circle cx="8.500" cy="3.800" r="1" fill="#fff"/><path d="M17 17l5 3-5 3" fill="none" stroke="#333" stroke-width="1.500"/></svg></button>
  <span class="grip"></span>
  <button class="tool" aria-label="帮助"><svg viewBox="0 0 24 24"><path d="M2 1h20v22H2z" fill="#6a98cc" stroke="#1c2b3b"/><path d="M2 1h4v22H2z" fill="#24384e"/><text x="10" y="17" font-family="Liberation Serif" font-size="15" font-weight="bold" fill="#fff">?</text></svg></button>
  <span class="grip"></span>
</div>

<div class="toolbar d-flex align-items-center flex-shrink-0" role="toolbar">
  <span class="grip first"></span>
  <button class="tool" aria-label="启用捕捉"><svg viewBox="0 0 24 24"><path d="M2 17l4-3c2 5 9 4 10-1 1-3-2-5-5-6l2-5c12 4 12 17 2 20-6 2-11 0-13-5z" fill="#c11" stroke="#700"/><path d="M11 7l2-5 3 1-2 5zM2 17l4-3 2 3-4 3z" fill="#fff" stroke="#777"/></svg></button>
  <button class="tool off sub" aria-label="捕捉图层"><svg viewBox="0 0 24 24"><path d="M3 3l5 17L12 6M8 20l6-6h7M12 6h9" fill="none" stroke="#777" stroke-width="1.500"/><path d="M1 1h4v4H1zM6 18h4v4H6zM10 4h4v4h-4zM18 4h4v4h-4zM18 12h4v4h-4z" fill="#ddd" stroke="#777"/></svg></button>
  <button class="tool on off sub" aria-label="捕捉类型"><svg viewBox="0 0 24 24"><path d="M4 5h3v3H4zM16 6h3v3h-3zM10 18h3v3h-3z" fill="#eee" stroke="#555"/></svg></button>
  <div class="field dim w-tol ms-1"><input value="12" aria-label="容差" disabled><span class="spin"><button aria-label="增加"></button><button aria-label="减少"></button></span></div>
  <div class="field dim pick w-unit ms-1"><select aria-label="单位" disabled><option>像素</option></select></div>
  <button class="tool" aria-label="拓扑编辑"><svg viewBox="0 0 24 24"><path d="M3 1l6 10 13-4M9 11v12" stroke="#6db573" stroke-width="2" fill="none"/><path d="M7 8.500h5v5H7z" fill="#bbb" stroke="#666"/></svg></button>
  <button class="tool sub" aria-label="避免重叠"><svg viewBox="0 0 24 24"><path d="M5 2c6-2 8 0 12-1s7 3 6 7-5 4-9 2-10 0-11-4z" fill="#b9b9b9" stroke="#555"/><path d="M1 7c0-5 9-7 11-2 2 3-1 5 1 8s4 9-1 10c-6 1-6-4-7-8S1 11 1 7z" fill="#8ecb85" stroke="#2e4a2c" stroke-width="1.200"/></svg></button>
  <button class="tool off" aria-label="交点捕捉"><svg viewBox="0 0 24 24"><path d="M1 1l22 22M23 1L1 23" stroke="#999" stroke-width="2"/><circle cx="12" cy="12" r="3" fill="#fff" stroke="#888"/></svg></button>
  <button class="tool off" aria-label="启用追踪"><svg viewBox="0 0 24 24"><path d="M2 22L22 1" stroke="#888" stroke-width="1.500"/><path d="M4 3l5 5 8 2 2 11-6-6-7-1z" fill="#b8a870"/></svg></button><span class="drop off"></span>
  <button class="tool off" aria-label="自相交捕捉"><svg viewBox="0 0 24 24"><path d="M2 21l6-4L6 5l9 10 8-12" fill="none" stroke="#888" stroke-width="2"/><path d="M13 14l6-11 3 2-7 12z" fill="#bba" stroke="#998"/><circle cx="3" cy="21" r="2" fill="#fff" stroke="#777"/><circle cx="8" cy="16" r="2" fill="#fff" stroke="#777"/></svg></button>
</div>

<main class="d-flex flex-grow-1" style="min-height:0">
  <aside class="side d-flex flex-column">
    <div class="dock-head d-flex align-items-center gap-1"><span class="flex-grow-1">浏览器</span>
      <button aria-label="浮动浏览器"><svg viewBox="0 0 11 11"><rect x=".5" y=".5" width="10" height="10" rx="2" fill="none" stroke="#666"/><path d="M4.500 2.500h4v4h-4zM2.500 4.500h4v4h-4z" fill="#efefef" stroke="#555"/></svg></button>
      <button aria-label="关闭浏览器"><svg viewBox="0 0 11 11"><rect x=".5" y=".5" width="10" height="10" rx="2" fill="none" stroke="#666"/><path d="M3 3l5 5M8 3L3 8" stroke="#444" stroke-width="1.800"/></svg></button>
    </div>
    <div class="dock-tools d-flex align-items-center">
      <button aria-label="添加图层"><svg viewBox="0 0 16 16"><path d="M1.500 1.500h12v12h-12z" fill="none" stroke="#777"/><circle cx="13" cy="13" r="2.500" fill="#fff" stroke="#5a9a5f" stroke-width="1.500"/></svg></button>
      <button aria-label="刷新浏览器"><svg><use href="#sync"/></svg></button>
      <button aria-label="过滤浏览器"><svg><use href="#funnel"/></svg></button>
      <button aria-label="全部折叠"><svg><use href="#tree-up"/></svg></button>
      <button aria-label="属性"><svg><use href="#info"/></svg></button>
    </div>
    <div class="tree tree-browser d-flex">
      <ul class="flex-grow-1">
        <li><button class="tw" aria-label="展开"></button><svg viewBox="0 0 16 16"><path d="M1.500 2.500h5l2 2h6v9.500h-13z" fill="#f3f3f3" stroke="#888"/></svg>F:\ (文档)</li>
        <li><svg><use href="#box"/></svg>GeoPackage</li>
        <li><svg><use href="#feather"/></svg>SpatiaLite</li>
        <li><svg viewBox="0 0 16 16"><path d="M1 2c3-2 5 0 7-1s6-1 7 2-2 7-2 7l1 1c-1 1-3 0-3 0l-1 4H8l-1-5-2 1C2 9 0 5 1 2z" fill="#6d97c6" stroke="#34506e"/><path d="M6 2c-1 3-1 5 0 8M11 2c1 3 0 5 0 8" fill="none" stroke="#34506e"/></svg>PostGIS</li>
        <li><svg viewBox="0 0 16 16"><path d="M1 1h14v14H1z" fill="none" stroke="#35587e" stroke-width="2" stroke-dasharray="1 1.500"/><path d="M3 3h10v10H3z" fill="#6d97c6"/></svg>SAP HANA</li>
        <li><svg viewBox="0 0 16 16"><path d="M1 1c6 0 9 2 14 6-4 2-9 3-14 8 3-6 2-9 0-14z" fill="#5f88b5" stroke="#35587e"/><path d="M5 2c2 4 1 7 0 9M8 3c2 3 1 5 0 7M11 5c1 2 0 3 0 4" fill="none" stroke="#35587e"/></svg>MSSQL</li>
        <li><svg viewBox="0 0 16 16"><rect x="1" y="3" width="14" height="10" rx="4" fill="#6d97c6" stroke="#34506e" stroke-width="1.500"/></svg>Oracle</li>
        <li><svg><use href="#globe"/></svg>WMS/WMTS</li>
        <li><svg viewBox="0 0 16 16"><path d="M1.500 1.500h13v13h-13zM1 6h14M1 10.500h14M6 1v14M10.500 1v14" fill="#a6bfda" stroke="#37475a" stroke-width="1.500"/></svg>Vector Tiles</li>
        <li><button class="tw open" aria-label="折叠"></button><svg><use href="#grid9"/></svg>XYZ Tiles</li>
        <li class="deep"><svg><use href="#grid9"/></svg>esri image</li>
        <li class="deep"><svg><use href="#grid9"/></svg>OpenStreetMap</li>
        <li class="deep"><svg><use href="#grid9"/></svg>ÖPNV Karte</li>
        <li class="deep picked"><svg><use href="#grid9"/></svg>高德地图</li>
        <li><svg viewBox="0 0 16 16"><circle cx="8" cy="8" r="7" fill="#8fb0d4" stroke="#2c4766" stroke-width="1.500"/><path d="M1 6h14M1 10h14M6 1v14M10 1v14" stroke="#2c4766"/><path d="M5 6h6v4H5z" fill="#c9dcf0"/></svg>WCS</li>
        <li><svg viewBox="0 0 16 16"><circle cx="8" cy="8" r="7" fill="#e4edf6" stroke="#7f9dbd"/><path d="M1 8h14M8 1v14" stroke="#a9c1da"/><path d="M3 4l4 9 3-9h4" fill="none" stroke="#2f4c6d" stroke-width="1.200"/></svg>WFS / OGC API - Features</li>
        <li><svg viewBox="0 0 16 16"><circle cx="8" cy="8" r="7" fill="#e4edf6" stroke="#7f9dbd"/><path d="M3 3l5-1 4 2-2 4-4 0z" fill="#6b8fb5"/><path d="M2 10h4v4H3zM9 8l4 1-1 4z" fill="#2f4c6d"/></svg>ArcGIS REST 服务器</li>
        <li><svg viewBox="0 0 16 16"><path d="M8 1v14M2 4l12 8M14 4L2 12" stroke="#6487ad" stroke-width="2.500"/><circle cx="8" cy="8" r="3" fill="#6487ad"/></svg>GeoNode</li>
      </ul>
      <div class="scroll-col"><button aria-label="向上滚动"></button><span class="trough long"></span><span class="flex-grow-1"></span><span class="trough"></span><button aria-label="向下滚动"></button></div>
    </div>
    <div class="splitter"><i></i></div>
    <div class="dock-head d-flex align-items-center gap-1"><span class="flex-grow-1">图层</span>
      <button aria-label="浮动图层"><svg viewBox="0 0 11 11"><rect x=".5" y=".5" width="10" height="10" rx="2" fill="none" stroke="#666"/><path d="M4.500 2.500h4v4h-4zM2.500 4.500h4v4h-4z" fill="#efefef" stroke="#555"/></svg></button>
      <button aria-label="关闭图层"><svg viewBox="0 0 11 11"><rect x=".5" y=".5" width="10" height="10" rx="2" fill="none" stroke="#666"/><path d="M3 3l5 5M8 3L3 8" stroke="#444" stroke-width="1.800"/></svg></button>
    </div>
    <div class="dock-tools d-flex align-items-center">
      <button aria-label="图层样式"><svg viewBox="0 0 16 16"><path d="M1 7l5-2 6 6-4 4-5-1z" fill="#f2cf4a"/><path d="M1 7l5-2 1 3-4 2z" fill="#d44"/><path d="M3 14l5 1 2-3-4-1z" fill="#58b"/><path d="M8 7l6-6 1 2-5 6z" fill="#c98b35" stroke="#85571a" stroke-width=".7"/></svg></button>
      <button aria-label="添加组"><svg viewBox="0 0 16 16"><path d="M6 1h8v10H6zM3.500 4v9h9M1 7v8h8" fill="none" stroke="#666"/><path d="M9 3l-2 4h1v4h2V7h1z" fill="#58b"/><rect x="10" y="10" width="6" height="6" rx="1" fill="#5a9a5f"/><path d="M13 11v4M11 13h4" stroke="#fff"/></svg></button>
      <button class="sub" aria-label="地图主题"><svg viewBox="0 0 16 16"><path d="M0 8c4-6 12-6 16 0-4 5-12 5-16 0z" fill="#eee" stroke="#999"/><circle cx="8" cy="7.500" r="3.200" fill="#6f93bb"/><circle cx="8" cy="7.500" r="1.500" fill="#111"/></svg></button>
      <button class="sub" aria-label="过滤图例"><svg><use href="#funnel"/></svg></button>
      <button aria-label="按表达式过滤"><svg viewBox="0 0 16 16"><path d="M8 2C4 0 1 4 5 5.500 0 6 2 12 7 9.500" fill="none" stroke="#75507b" stroke-width="1.800"/><path d="M8 8h7v7h-2v-4h-3v4H8z" fill="#999"/></svg></button><span class="drop"></span>
      <button aria-label="全部展开"><svg><use href="#tree-down"/></svg></button>
      <button aria-label="折叠图层"><svg><use href="#tree-up"/></svg></button>
      <button aria-label="移除图层"><svg viewBox="0 0 16 16"><path d="M1.500 1.500h12v12h-12z" fill="none" stroke="#777"/><rect x="9" y="10" width="6" height="5" rx="1" fill="#e04848"/><path d="M10 12.500h4" stroke="#fff"/></svg></button>
    </div>
    <div class="tree layers flex-grow-1">
      <ul>
        <li class="current"><button class="tw" aria-label="展开"></button><input class="tick" type="checkbox" id="l1" checked><svg><use href="#poly"/></svg><label for="l1">Export_Output</label></li>
        <li><button class="tw" aria-label="展开"></button><input class="tick" type="checkbox" id="l2"><svg class="grey-icon"><use href="#poly"/></svg><label for="l2">china_disslove</label></li>
        <li><input class="tick" type="checkbox" id="l3"><svg viewBox="0 0 16 16"><path d="M0 8h14" stroke="#e5474f" stroke-width="2"/></svg><label for="l3">china_nine_dotted_line</label></li>
        <li><input class="tick" type="checkbox" id="l4"><svg viewBox="0 0 16 16"><path d="M.5.5h15v15H.5z" fill="#e0b52c" stroke="#e3342b"/></svg><label for="l4">guangzhou</label></li>
        <li><button class="tw" aria-label="展开"></button><input class="tick" type="checkbox" id="l5"><svg><use href="#raster"/></svg><label for="l5">CLCD2020_albert_recls</label></li>
        <li class="base"><button class="tw open" aria-label="折叠"></button><input class="tick" type="checkbox" id="l6"><svg><use href="#raster"/></svg><label for="l6" class="fw-normal">高德地图</label></li>
      </ul>
    </div>
  </aside>

  <section class="canvas flex-grow-1" aria-label="地图">
    <svg viewBox="301 163 1618 848" role="img" aria-label="河南省各市">
      <g stroke="#232323" stroke-opacity=".6" stroke-width="2.600" stroke-linejoin="round">
        <g transform="translate(600 360) scale(.33333)">
          <path fill="#f3b4f1" d="M280 795L275 800 284 825 273 840 282 870 274 885 265 905 275 925 292 935 288 945 297 941 318 955 345 975 347 983 332 992 365 993 368 1005 380 1018 367 1035 370 1053 383 1049 385 1060 420 1078 432 1100 453 1098 438 1113 470 1135 480 1155 495 1166 518 1152 526 1163 535 1157 558 1163 580 1180 605 1190 618 1202 645 1199 663 1220 683 1216 695 1230 722 1249 750 1247 787 1270 800 1256 820 1256 830 1262 875 1245 910 1250 935 1253 960 1264 1000 1244 1003 1252 1010 1250 1042 1253 1047 1240 1065 1234 1080 1238 1103 1252 1115 1233 1135 1233 1160 1252 1180 1272 1195 1275 1215 1292 1240 1280 1285 1257 1298 1240 1335 1232 1360 1210 1370 1160 1340 1100 1250 830 1000 740 500 680 372 690 330 740Z"/>
          <path fill="#ee89cb" d="M25 392L32 385 70 382 90 390 150 388 178 366 235 361 243 335 250 335 258 346 290 328 310 325 332 306 345 304 360 310 370 304 398 299 408 297 425 303 460 294 484 287 497 290 512 270 535 252 537 236 588 214 595 203 645 199 665 206 690 316 640 400 605 400 350 480 350 530 413 580 405 640 372 670 373 700 350 704 345 735 328 744 325 770 312 790 280 795 270 783 258 775 228 763 207 745 204 720 187 698 172 697 157 680 140 675 122 676 115 663 127 650 147 638 133 612 112 605 111 582 125 573 133 553 107 543 90 533 58 525 49 512 65 500 77 487 70 460 48 460 38 437 23 415 30 403 40 400Z"/>
        </g>
        <path fill="#d29fe9" transform="translate(960 240) scale(.33333)" d="M-105 667L0 640 60 615 125 590 380 590 400 600 440 615 445 650 425 740 380 810 325 855 235 890 130 870 30 900 0 890 -60 880 -135 855 -180 850 -180 700Z"/>
        <g transform="translate(600 360) scale(.33333)">
          <path fill="#c2bdf0" d="M905 488L988 489 990 502 1020 506 1050 502 1080 515 1200 570 1230 640 1225 700 1290 735 1330 760 1330 850 1320 955 1285 950 1250 947 1200 950 1205 915 1200 905 1207 880 1150 872 1125 843 1103 840 1100 820 1050 783 1020 770 995 773 990 783 960 786 920 775 890 770 872 780 860 765 825 746 800 750 775 735 760 730 750 700 840 650 870 500Z"/>
          <path fill="#b18eec" d="M645 206L660 205 670 215 685 219 700 200 900 240 975 307 988 317 1014 318 1014 345 987 346 987 380 1005 400 1022 410 1045 410 1022 412 1020 433 975 432 970 426 952 430 945 480 955 487 905 488 880 513 883 530 903 565 895 595 872 612 872 635 858 652 870 665 845 675 825 694 805 683 775 692 767 700 760 730 735 730 725 729 718 748 703 758 688 760 695 785 685 782 680 768 670 768 668 780 633 787 600 775 593 755 560 742 540 745 522 728 480 722 462 726 425 710 390 709 375 700 355 668 360 648 390 642 412 622 405 600 413 578 395 575 390 563 365 552 340 533 346 515 343 490 327 475 350 460 358 445 375 443 380 433 400 437 430 430 470 407 505 400 532 410 537 397 560 385 565 390 600 366 632 384 655 358 660 335 674 316 655 288 640 283 630 270 617 266 625 257 640 256 655 242 648 235 652 225 643 215Z"/>
          <path fill="#e8f6c1" d="M685 122L740 130 745 137 770 133 775 145 800 145 815 135 835 143 905 145 913 128 922 143 958 152 962 180 950 235 862 268 815 262 800 256 785 250 778 256 770 247 763 252 740 244 725 230 708 220 680 216 688 190 687 170 681 157 692 148Z"/>
          <path fill="#e48fac" d="M864 268L885 245 915 239 945 215 957 185 960 155 968 140 1000 132 1025 132 1030 118 1048 117 1048 95 1060 90 1100 100 1112 78 1135 58 1168 64 1170 45 1200 42 1208 32 1240 60 1270 140 1310 200 1310 250 1280 248 1205 240 1165 252 1125 278 1090 292 1045 293 985 300 970 307 920 297Z"/>
        </g>
        <g transform="translate(960 240) scale(.33333)">
          <path fill="#89bce7" d="M197 268L228 263 260 260 440 330 600 420 733 430 762 458 750 480 720 515 690 522 692 555 677 575 680 595 652 603 665 625 655 633 615 620 570 627 515 623 455 627 437 618 415 612 405 600 375 602 345 630 310 632 260 622 225 625 200 605 218 578 205 540 185 530 175 515 182 495 172 478 163 475 155 440 142 415 125 408 125 395 150 392 168 382 170 370 185 350 187 338 213 343 203 305 205 290Z"/>
          <path fill="#aaf7b9" d="M258 60L268 58 275 68 300 70 305 64 330 67 345 65 347 73 352 63 358 75 362 62 370 65 372 82 388 95 405 93 435 103 442 98 450 103 465 98 490 105 520 115 525 123 545 123 570 138 590 153 620 150 655 145 665 150 715 148 720 160 715 178 745 180 760 240 740 350 745 380 742 425 733 440 690 440 665 453 635 456 633 470 610 475 580 480 565 495 548 508 530 505 517 485 518 465 525 455 520 440 520 400 480 360 358 317 345 323 300 325 283 327 282 300 262 275 245 266 222 263 226 235 222 208 235 207 242 195 232 190 240 183 230 155 245 148 232 138 242 132 234 125 243 120 245 100 252 90Z"/>
          <path fill="#c1eee7" d="M358 317L380 325 383 365 430 385 455 390 470 403 485 412 515 403 527 403 520 387 545 370 590 345 620 335 640 320 653 300 645 288 610 280 590 262 580 266 520 268 475 275 463 290 455 280 450 260 475 250 485 225 465 208 435 205 425 183 418 185 405 200 385 210 370 210 390 240 372 255 373 280 390 282 380 300Z"/>
          <path fill="#e6e1a4" d="M725 180L768 172 775 137 795 135 803 120 815 126 840 123 855 135 857 148 868 155 870 165 890 165 903 155 930 148 937 138 941 150 925 195 890 213 893 240 883 262 885 280 895 284 940 245 943 232 955 241 975 235 990 232 1010 230 1030 213 1060 208 1080 195 1130 185 1165 160 1175 158 1183 165 1165 185 1155 215 1112 212 1088 235 1098 247 1090 255 1060 255 1045 265 1032 263 1025 285 1008 300 950 305 915 340 905 368 883 365 890 398 860 410 838 427 822 415 790 435 762 446 758 457 733 440 745 425 737 400 735 365 705 350 718 330 710 295 725 280 728 262 740 245 745 212Z"/>
          <path fill="#b9e5ea" d="M442 622L455 627 515 623 570 627 615 620 655 633 665 625 652 603 680 593 700 587 720 598 760 597 800 587 810 600 837 605 830 622 850 627 845 645 857 655 850 690 740 730 730 800 730 870 690 885 645 900 560 890 470 895 415 905 370 885 316 850 315 812 330 806 365 806 370 787 395 790 402 765 420 738 420 705 415 690 425 675 415 655 438 653Z"/>
          <path fill="#c9f4c3" d="M857 655L865 643 890 650 920 670 925 690 925 715 955 750 1018 760 1023 745 1070 758 1130 750 1140 738 1150 748 1180 742 1195 763 1217 757 1218 775 1205 800 1225 832 1250 835 1285 858 1287 873 1312 870 1320 875 1340 865 1367 872 1353 890 1363 910 1347 935 1365 955 1375 980 1395 990 1390 1022 1365 1015 1310 1040 1308 1057 1250 1080 1207 1093 1160 1050 1165 1033 1135 1015 1140 990 1125 975 1095 965 1085 975 1065 953 1035 950 1003 955 990 965 900 1015 775 1015 775 950 750 900 710 870 697 855 703 830 697 815 718 795 718 760 710 735 708 715 725 712 718 707 692 705 687 685 700 678 715 685 760 680 795 680 802 672 815 675 835 665Z"/>
          <path fill="#f5cb85" d="M0 880L38 873 60 852 90 848 98 820 108 823 128 832 130 845 170 850 200 855 232 872 255 856 316 852 340 865 370 885 395 885 413 902 435 888 463 883 490 890 500 1070 478 1067 420 1065 300 1120 205 1105 200 1078 150 1080 145 1068 120 1065 118 1040 112 1025 130 1000 130 970 120 963 100 965 95 948 70 938 32 940 15 915Z"/>
        </g>
        <g transform="translate(960 500) scale(.33333)">
          <path fill="#f1b49c" d="M463 103L475 92 508 97 530 90 527 70 540 68 575 92 640 105 645 110 660 98 710 90 740 95 770 108 798 115 800 180 785 190 770 222 790 222 800 213 825 212 850 203 853 192 857 203 865 195 880 190 920 203 955 188 962 163 1003 163 1000 180 985 187 975 215 968 245 998 250 992 283 975 290 985 300 988 330 1000 360 960 372 915 370 908 390 887 393 888 413 877 420 880 440 893 460 885 490 865 520 863 537 820 545 810 556 755 553 735 530 718 540 712 557 690 590 590 520 550 440 470 430 440 330 398 315 400 300 415 278 475 290 487 270 480 205 465 165 472 155 468 110Z"/>
          <path fill="#bfead4" d="M205 320L235 320 265 318 268 300 265 270 258 260 262 248 305 245 315 220 350 208 380 206 385 218 405 225 413 240 410 255 418 275 410 293 398 305 400 320 410 335 435 320 458 317 465 350 475 375 475 410 435 430 240 440 235 424 200 425 180 420 155 422 160 405 180 395 185 365 215 345 200 330Z"/>
          <path fill="#f4b4b5" d="M240 428L280 420 315 405 345 405 375 383 395 388 432 415 472 403 500 408 535 408 545 422 580 425 585 440 605 455 620 458 645 475 640 500 628 520 650 545 665 563 690 566 712 557 723 580 708 597 725 612 765 617 765 625 805 630 815 643 830 648 822 665 822 715 832 725 822 750 700 760 640 800 625 840 570 875 500 875 400 815 340 795 290 755 283 740 270 722 245 710 225 705 215 707 210 727 190 740 170 757 150 747 130 740 115 752 80 747 55 757 47 740 50 718 70 718 50 700 42 660 32 650 40 645 48 627 30 620 5 613 15 595 40 568 80 560 120 545 120 530 175 530 185 533 215 527 220 517 210 495 215 465 235 445Z"/>
          <path fill="#bcf68e" d="M285 742L295 737 330 745 350 782 385 768 395 800 420 797 432 787 440 800 450 800 475 835 495 840 500 860 535 870 575 866 595 855 613 832 590 812 583 803 590 795 583 783 620 778 640 770 645 778 655 770 668 780 675 740 710 735 715 727 740 721 780 730 808 748 822 745 868 750 873 763 910 757 945 785 950 800 968 820 1010 817 1015 795 1020 787 1050 795 1055 785 1065 792 1080 780 1090 765 1105 753 1112 757 1088 783 1088 795 1097 800 1100 835 1107 870 1105 895 1115 915 1110 930 1115 950 1110 1000 1105 1020 1100 1035 1105 1055 1085 1070 1050 1070 1030 1065 1015 1066 945 1105 938 1130 918 1145 898 1180 900 1205 875 1218 848 1210 835 1198 838 1157 815 1135 800 1138 790 1165 755 1172 750 1183 720 1183 690 1187 665 1168 635 1163 605 1140 582 1150 575 1130 590 1100 588 1073 575 1078 560 1073 555 1083 475 1075 455 1045 430 1037 410 1045 405 1055 380 1068 355 1075 340 1050 340 1033 325 1028 305 1040 295 1030 290 1005 268 985 280 965 260 935 265 928 270 905 275 900 262 880 270 850 262 825 253 805 270 790 272 760Z"/>
        </g>
      </g>
    </svg>
    <div class="meter"><i></i></div>
  </section>
</main>

<footer class="status d-flex align-items-center flex-shrink-0 ps-1 pe-2">
  <div class="field find align-items-center me-auto">
    <svg width="14" height="14" viewBox="0 0 14 14" class="ms-2 flex-shrink-0"><circle cx="5.500" cy="5.500" r="4.500" fill="none" stroke="#888" stroke-width="1.500"/><path d="M9 9l4 4" stroke="#888" stroke-width="2"/></svg>
    <input type="search" placeholder="搜索 (Ctrl+K)" aria-label="搜索">
  </div>
  <label for="xy">坐标</label>
  <div class="field w-coord ms-1"><input id="xy" value="118.200,36.054"></div>
  <button class="btn p-0 border-0 rounded-0 mx-1 d-flex" aria-label="切换范围显示"><svg width="18" height="18" viewBox="0 0 18 18"><path d="M3 5l4-3 8 9-1 5-5-1zM3 5l-2-3M6 2l1 5M9 10l5-8M13 6l4-5M3 10l4 5" fill="#aaa" stroke="#222" stroke-width="1.300"/></svg></button>
  <label for="scale" class="ms-2">比例</label>
  <div class="field pick split w-scale ms-1"><select id="scale"><option>1:2013198</option></select></div>
  <button class="btn p-0 border-0 rounded-0 ms-2 me-1 d-flex" aria-label="锁定比例"><svg width="20" height="18" viewBox="0 0 20 18"><path d="M6 8V5c0-5 8-5 8 0v3" fill="none" stroke="#777" stroke-width="2"/><rect x="4" y="8" width="12" height="9" rx="1" fill="#666"/></svg></button>
  <label for="zoom">放大镜</label>
  <div class="field w-spin ms-1"><input id="zoom" value="100%"><span class="spin"><button aria-label="增加"></button><button aria-label="减少"></button></span></div>
  <label for="rot" class="ms-2 me-1">旋转角度</label>
  <div class="field w-spin ms-1"><input id="rot" value="0.0°"><span class="spin"><button aria-label="增加"></button><button aria-label="减少"></button></span></div>
  <input class="tick ms-2" type="checkbox" id="render" checked><label for="render" class="ms-1">渲染</label>
  <button class="epsg d-flex align-items-center ms-3"><svg width="14" height="14" viewBox="0 0 14 14"><circle cx="7" cy="7" r="6" fill="#aaa" stroke="#777"/><path d="M1 7h12M7 1v12M3 2c3 3 3 7 0 10M11 2c-3 3-3 7 0 10M2 4h10M2 10h10" fill="none" stroke="#666"/></svg>EPSG:4326</button>
  <button class="btn p-0 border-0 rounded-0 d-flex" aria-label="消息"><svg width="17" height="16" viewBox="0 0 17 16"><path d="M8.500 1c10 0 10 12 3 12l1 3-5-3C-1 13-1 1 8.500 1z" fill="#666"/></svg></button>
</footer>

<nav class="taskbar d-flex align-items-center flex-shrink-0">
  <button class="task" aria-label="开始"><svg viewBox="0 0 24 24"><path d="M4 6l7-1v7H4zM12 5l8-1v8h-8zM4 13h7v7l-7-1zM12 13h8v8l-8-1z" fill="#fff"/></svg></button>
  <button class="task" aria-label="搜索"><svg viewBox="0 0 24 24"><circle cx="14" cy="9" r="5.500" fill="none" stroke="#fff" stroke-width="1.400"/><path d="M10 13l-6 7" stroke="#fff" stroke-width="1.400"/></svg></button>
  <button class="task" aria-label="任务视图"><svg viewBox="0 0 24 24"><path d="M4.500 8.500h10v7h-10zM4.500 4v2.500h10V4M4.500 20v-2.500h10V20M18.500 4v16" fill="none" stroke="#fff"/><path d="M17 8h3v4h-3z" fill="#fff"/></svg></button>
  <button class="task" aria-label="计算器"><svg viewBox="0 0 24 24"><path d="M3 0h18v24H3z" fill="#fff"/><path d="M5 3h14v4H5z" fill="#04464f"/><path d="M6 10h3v2H6zM11 10h3v2h-3zM16 10h3v2h-3zM6 15h3v2H6zM11 15h3v2h-3zM16 15h3v2h-3zM6 20h3v2H6zM11 20h3v2h-3zM16 20h3v2h-3z" fill="#04464f"/></svg></button>
  <button class="task" aria-label="控制面板"><svg viewBox="0 0 24 24"><rect x="2" y="5" width="21" height="15" rx="1" fill="#6cc5f0" stroke="#bfe6fa"/><circle cx="8" cy="11" r="3.500" fill="#fff"/><path d="M8 11V7a4 4 0 014 4z" fill="#0b63a8"/><path d="M14 8h6M14 11h6M15 14h5" stroke="#155f93" stroke-width="1.500"/><path d="M5 17h9" stroke="#f5a623" stroke-width="1.500"/></svg></button>
  <button class="task" aria-label="Edge"><svg viewBox="0 0 24 24"><circle cx="12" cy="12" r="11.500" fill="url(#g-edge)"/><path d="M1 11c1-6 12-8 14 0-3-1-6 1-5 5 1 3 5 4 8 3-4 6-17 5-17-8z" fill="#0f65b5"/><path d="M10 14c0 4 5 6 11 3-2 6-12 8-16 0-1-5 5-8 5-3z" fill="#0b3f86"/><path d="M23.500 12c0 4-5 5-9 3 2-1 2-4 0-5z" fill="#6fdc78"/></svg></button>
  <button class="task" aria-label="Chrome"><svg><use href="#chrome"/></svg></button>
  <button class="task run" aria-label="小牛"><svg viewBox="0 0 24 24"><path d="M4 1c0 4 2 5 4 5M20 1c0 4-2 5-4 5" fill="none" stroke="#f3b24a" stroke-width="3"/><path d="M0 8l6-1 1 4zM24 8l-6-1-1 4z" fill="#445"/><path d="M6 6h12l1 9H5z" fill="#fff" stroke="#223"/><path d="M6 6h6v5l-4 3-2-3z" fill="#556"/><rect x="5" y="14" width="14" height="9" rx="4" fill="#f79aa8" stroke="#223"/><path d="M8 11h2v2H8zM14 11h2v2h-2z" fill="#000"/></svg></button>
  <button class="task run" aria-label="Chrome 窗口"><svg><use href="#chrome"/></svg></button>
  <button class="task" aria-label="文件资源管理器"><svg viewBox="0 0 24 24"><path d="M1 3h8l2 2h12v16H1z" fill="#f8c63d"/><path d="M2 7h20v14H2z" fill="#fddc7c"/><path d="M5 21v-8h14v8h-4v-4H9v4z" fill="#2d8fd6"/></svg></button>
  <button class="task run" aria-label="ZY"><svg viewBox="0 0 24 24"><path d="M1 2l5-1h6v21l-8 1-3-2z" fill="#c8341f"/><path d="M12 1h8l3 2v18l-4 2-7-1z" fill="#173a7c"/><text x="2" y="18" font-family="Roboto" font-size="16" font-weight="bold" fill="#fff">ZY</text></svg></button>
  <button class="task run front" aria-label="QGIS"><svg><use href="#qgis"/></svg></button>
  <div class="tray d-flex ms-auto">
    <button aria-label="显示隐藏的图标"><svg viewBox="0 0 16 16"><path d="M2 11l6-6 6 6" fill="none" stroke="#fff" stroke-width="1.500"/></svg></button>
    <button aria-label="QQ"><svg><use href="#qq"/></svg></button>
    <button aria-label="QQ 2"><svg><use href="#qq"/></svg></button>
    <button aria-label="微信"><svg viewBox="0 0 16 16"><ellipse cx="6" cy="6" rx="5.500" ry="5" fill="#2ecc5f"/><ellipse cx="11" cy="10.500" rx="4.700" ry="4" fill="#e8f3ea"/><path d="M4 4v1M8 4v1" stroke="#063"/></svg></button>
    <button aria-label="同步"><svg viewBox="0 0 16 16"><path d="M1 2h10v12H1zM11 2l4-1v11M5 10c-3-4 2-6 4-3M9 5v2H7" fill="none" stroke="#fff" stroke-width="1.200"/><circle cx="11.500" cy="12.500" r="3.500" fill="#e81123"/></svg></button>
    <button aria-label="网络"><svg viewBox="0 0 16 16"><path d="M4.500 3.500h11v8h-11zM7 14.500h6M10 12v2M.5 1.500h4v4h-4zM2.500 6v8" fill="none" stroke="#fff"/></svg></button>
    <button aria-label="音量"><svg viewBox="0 0 16 16"><path d="M1 6h2l4-4v12l-4-4H1zM9 5c2 2 2 4 0 6M11 3c3 3 3 7 0 10M13 1c4 4 4 10 0 14" fill="none" stroke="#fff"/></svg></button>
    <button aria-label="输入法">中</button>
    <button class="mx-1" aria-label="搜狗输入法"><svg viewBox="0 0 16 16"><rect x="1" y="1" width="14" height="14" rx="2" fill="#f4511e"/><path d="M12 4C4 2 3 7 8 8s3 5-4 3" fill="none" stroke="#fff" stroke-width="2.200"/></svg></button>
  </div>
  <div class="clock d-flex flex-column justify-content-center"><span>14:42:46</span><span>2022/7/25 星期一</span><span class="stamp">CSDN @BetterQ.</span></div>
</nav>
</body>
</html>
